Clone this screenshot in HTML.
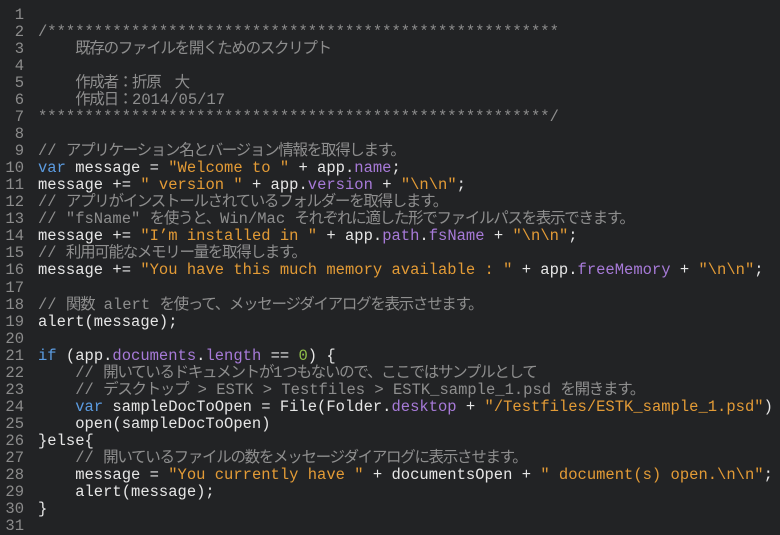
<!DOCTYPE html>
<html><head><meta charset="utf-8"><style>
html,body{margin:0;padding:0;background:#222325;width:780px;height:534px;overflow:hidden}
.w{position:absolute;top:7px;left:0;font-family:"Liberation Mono","Noto Sans CJK JP",monospace;font-size:15.5px;line-height:17.03px;color:#e6e6e6;white-space:pre}
.n{position:absolute;top:0;left:0;width:24px;text-align:right;color:#8c8c8c}
.c{position:absolute;top:0;left:38px}
.j{letter-spacing:-1.3px}
.cm{color:#8e8e8e}
.k{color:#5b9be0}
.s{color:#e39b36}
.p{color:#a77ad8}
.g{color:#8fbf4a}
</style></head><body><div class="w"><div class="n">1
2
3
4
5
6
7
8
9
10
11
12
13
14
15
16
17
18
19
20
21
22
23
24
25
26
27
28
29
30
31</div><div class="c"><span class="cm">
/*******************************************************
    <span class="j">既存のファイルを開くためのスクリプト</span>

    <span class="j">作成者：折原　大</span>
    <span class="j">作成日：</span>2014/05/17
*******************************************************/

// <span class="j">アプリケーション名とバージョン情報を取得します。</span></span>
<span class="k">var</span> message = <span class="s">"Welcome to "</span> + app.<span class="p">name</span>;
message += <span class="s">" version "</span> + app.<span class="p">version</span> + <span class="s">"\n\n"</span>;
<span class="cm">// <span class="j">アプリがインストールされているフォルダーを取得します。</span>
// "fsName" <span class="j">を使うと、</span>Win/Mac <span class="j">それぞれに適した形でファイルパスを表示できます。</span></span>
message += <span class="s">"I’m installed in "</span> + app.<span class="p">path</span>.<span class="p">fsName</span> + <span class="s">"\n\n"</span>;
<span class="cm">// <span class="j">利用可能なメモリー量を取得します。</span></span>
message += <span class="s">"You have this much memory available : "</span> + app.<span class="p">freeMemory</span> + <span class="s">"\n\n"</span>;

<span class="cm">// <span class="j">関数</span> alert <span class="j">を使って、メッセージダイアログを表示させます。</span></span>
alert(message);

<span class="k">if</span> (app.<span class="p">documents</span>.<span class="p">length</span> == <span class="g">0</span>) {
    <span class="cm">// <span class="j">開いているドキュメントが</span>1<span class="j">つもないので、ここではサンプルとして</span>
    // <span class="j">デスクトップ</span> &gt; ESTK &gt; Testfiles &gt; ESTK_sample_1.psd <span class="j">を開きます。</span></span>
    <span class="k">var</span> sampleDocToOpen = File(Folder.<span class="p">desktop</span> + <span class="s">"/Testfiles/ESTK_sample_1.psd"</span>)
    open(sampleDocToOpen)
}else{
    <span class="cm">// <span class="j">開いているファイルの数をメッセージダイアログに表示させます。</span></span>
    message = <span class="s">"You currently have "</span> + documentsOpen + <span class="s">" document(s) open.\n\n"</span>;
    alert(message);
}
</div></div>
</body></html>
